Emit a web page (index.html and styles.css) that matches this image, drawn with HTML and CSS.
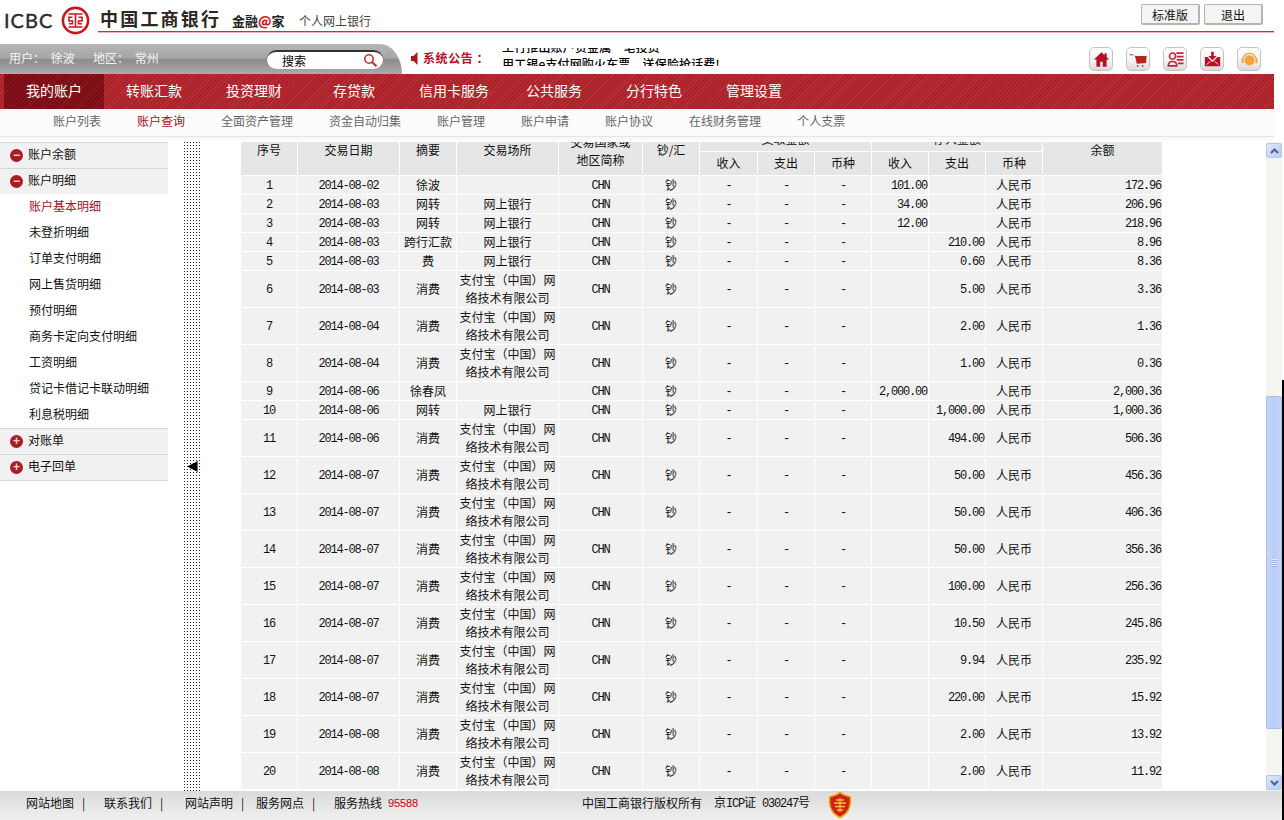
FILE: index.html
```html
<!DOCTYPE html>
<html lang="zh-CN">
<head>
<meta charset="utf-8">
<title>中国工商银行 个人网上银行</title>
<link rel="stylesheet" href="styles.css">
</head>
<body>
<header class="top">
  <div class="brand">
    <span class="icbc">ICBC</span>
    <svg class="logo" width="29" height="29" viewBox="0 0 29 29"><circle cx="14.5" cy="14.5" r="12.6" fill="none" stroke="#c8161d" stroke-width="2.6"/><path d="M7.500 8h14M7.500 21h14M14.500 8v13M11.500 11.300H8V15h3.500v2.800H8M17.500 11.300H21V15h-3.500v2.800H21" fill="none" stroke="#c8161d" stroke-width="1.600"/></svg>
    <span class="bankname">中国工商银行</span>
    <span class="slogan">金融<b>@</b>家</span>
    <span class="personal">个人网上银行</span>
  </div>
  <div class="top-btns">
    <span class="btn">标准版</span>
    <span class="btn">退出</span>
  </div>
</header>
<div class="rule"></div>

<div class="infobar">
  <div class="userbar">
    <span class="who">用户： 徐波</span>
    <span class="who region">地区： 常州</span>
    <div class="search">
      <span>搜索</span>
      <svg width="15" height="15" viewBox="0 0 15 15"><circle cx="6" cy="6" r="4.200" fill="none" stroke="#c9302c" stroke-width="1.600"/><path d="M9.200 9.200l4.300 4" stroke="#c9302c" stroke-width="2.200"/></svg>
    </div>
  </div>
  <svg class="speaker" width="7" height="13" viewBox="0 0 7 13"><path d="M0 4h2.500L6.500 0v13L2.500 9H0z" fill="#b5121b"/></svg>
  <span class="notice-label">系统公告<span class="colon">：</span></span>
  <div class="ticker">
    <div class="ticker-in">工行推出账户贵金属一笔投资<br>用工银e支付网购火车票，送保险抢话费!</div>
  </div>
  <div class="tiles">
    <span class="tile"><svg width="20" height="20" viewBox="0 0 20 20"><path d="M10 1.500L1 10h3v8.500h4.500v-6h3v6H16V10h3l-3-2.800V2.500h-2.500v2.400z" fill="#b5122a"/></svg></span>
    <span class="tile"><svg width="20" height="20" viewBox="0 0 20 20"><path d="M0 3.500l4 1 1 1.500h14.500l-.5 8-11 1-2-8.500-1-1.500L0 5z" fill="#b5251e"/><circle cx="9" cy="17.500" r="1" fill="#b5251e"/><circle cx="15" cy="17.500" r="1" fill="#b5251e"/></svg></span>
    <span class="tile"><svg width="20" height="20" viewBox="0 0 20 20"><circle cx="6.500" cy="6" r="3.600" fill="none" stroke="#c8213f" stroke-width="1.800"/><path d="M1.500 17.500c0-7 10-7 10 0z" fill="none" stroke="#c8213f" stroke-width="1.800"/><path d="M11 2.500h8.500M11.500 6.500h8M11.500 10.500h8M13 14.500h6.500" stroke="#c8213f" stroke-width="2"/></svg></span>
    <span class="tile"><svg width="20" height="20" viewBox="0 0 20 20"><path d="M8.500 1h3v5H15l-5 5-5-5h3.500z" fill="#b5122a"/><path d="M1 7h3l6 6 6-6h3v11H1z" fill="#b5122a"/><path d="M3 16l4.500-4M17 16l-4.500-4" stroke="#fff" stroke-width="1"/></svg></span>
    <span class="tile"><svg width="20" height="20" viewBox="0 0 20 20"><circle cx="10" cy="11" r="6" fill="#f7a23b"/><path d="M1.800 11a8.200 8.200 0 0 1 16.400 0" fill="none" stroke="#f7a23b" stroke-width="1.600"/><rect x=".5" y="8.500" width="2.500" height="6" rx="1" fill="#f7a23b"/><rect x="17" y="8.500" width="2.500" height="6" rx="1" fill="#f7a23b"/></svg></span>
  </div>
</div>

<nav class="mainnav">
  <a class="active">我的账户</a><a>转账汇款</a><a>投资理财</a><a>存贷款</a><a>信用卡服务</a><a>公共服务</a><a>分行特色</a><a>管理设置</a>
</nav>
<nav class="subnav">
  <a>账户列表</a><a class="on">账户查询</a><a>全面资产管理</a><a>资金自动归集</a><a>账户管理</a><a>账户申请</a><a>账户协议</a><a>在线财务管理</a><a>个人支票</a>
</nav>
<div class="fade"></div>

<main class="main">
  <aside class="side">
    <div class="group"><i class="dot">−</i>账户余额</div>
    <div class="group"><i class="dot">−</i>账户明细</div>
    <a class="item cur">账户基本明细</a>
    <a class="item">未登折明细</a>
    <a class="item">订单支付明细</a>
    <a class="item">网上售货明细</a>
    <a class="item">预付明细</a>
    <a class="item">商务卡定向支付明细</a>
    <a class="item">工资明细</a>
    <a class="item">贷记卡借记卡联动明细</a>
    <a class="item">利息税明细</a>
    <div class="group"><i class="dot">+</i>对账单</div>
    <div class="group last"><i class="dot">+</i>电子回单</div>
  </aside>
  <div class="strip"><span class="collapse"></span></div>
  <section class="content">
    <table class="ledger">
      <colgroup><col class="c57"><col class="c102"><col class="c57"><col class="c102"><col class="c84"><col class="c57"><col class="c58"><col class="c57"><col class="c57"><col class="c57"><col class="c57"><col class="c57"><col class="c120"></colgroup>
      <thead>
        <tr class="h1">
          <th rowspan="2">序号</th><th rowspan="2">交易日期</th><th rowspan="2">摘要</th><th rowspan="2">交易场所</th>
          <th rowspan="2" class="two">交易国家或<br>地区简称</th><th rowspan="2">钞/汇</th>
          <th colspan="3" class="grp">支取金额</th><th colspan="3" class="grp">存入金额</th><th rowspan="2">余额</th>
        </tr>
        <tr class="h2"><th>收入</th><th>支出</th><th>币种</th><th>收入</th><th>支出</th><th>币种</th></tr>
      </thead>
      <tbody>
        <tr><td class="m">1</td><td class="m">2014-08-02</td><td>徐波</td><td></td><td class="m">CHN</td><td>钞</td><td class="m">-</td><td class="m">-</td><td class="m">-</td><td class="m r">101.00</td><td class="m r"></td><td>人民币</td><td class="m r">172.96</td></tr>
        <tr><td class="m">2</td><td class="m">2014-08-03</td><td>网转</td><td>网上银行</td><td class="m">CHN</td><td>钞</td><td class="m">-</td><td class="m">-</td><td class="m">-</td><td class="m r">34.00</td><td class="m r"></td><td>人民币</td><td class="m r">206.96</td></tr>
        <tr><td class="m">3</td><td class="m">2014-08-03</td><td>网转</td><td>网上银行</td><td class="m">CHN</td><td>钞</td><td class="m">-</td><td class="m">-</td><td class="m">-</td><td class="m r">12.00</td><td class="m r"></td><td>人民币</td><td class="m r">218.96</td></tr>
        <tr><td class="m">4</td><td class="m">2014-08-03</td><td>跨行汇款</td><td>网上银行</td><td class="m">CHN</td><td>钞</td><td class="m">-</td><td class="m">-</td><td class="m">-</td><td class="m r"></td><td class="m r">210.00</td><td>人民币</td><td class="m r">8.96</td></tr>
        <tr><td class="m">5</td><td class="m">2014-08-03</td><td>费</td><td>网上银行</td><td class="m">CHN</td><td>钞</td><td class="m">-</td><td class="m">-</td><td class="m">-</td><td class="m r"></td><td class="m r">0.60</td><td>人民币</td><td class="m r">8.36</td></tr>
        <tr><td class="m">6</td><td class="m">2014-08-03</td><td>消费</td><td>支付宝（中国）网<br>络技术有限公司</td><td class="m">CHN</td><td>钞</td><td class="m">-</td><td class="m">-</td><td class="m">-</td><td class="m r"></td><td class="m r">5.00</td><td>人民币</td><td class="m r">3.36</td></tr>
        <tr><td class="m">7</td><td class="m">2014-08-04</td><td>消费</td><td>支付宝（中国）网<br>络技术有限公司</td><td class="m">CHN</td><td>钞</td><td class="m">-</td><td class="m">-</td><td class="m">-</td><td class="m r"></td><td class="m r">2.00</td><td>人民币</td><td class="m r">1.36</td></tr>
        <tr><td class="m">8</td><td class="m">2014-08-04</td><td>消费</td><td>支付宝（中国）网<br>络技术有限公司</td><td class="m">CHN</td><td>钞</td><td class="m">-</td><td class="m">-</td><td class="m">-</td><td class="m r"></td><td class="m r">1.00</td><td>人民币</td><td class="m r">0.36</td></tr>
        <tr><td class="m">9</td><td class="m">2014-08-06</td><td>徐春凤</td><td></td><td class="m">CHN</td><td>钞</td><td class="m">-</td><td class="m">-</td><td class="m">-</td><td class="m r">2,000.00</td><td class="m r"></td><td>人民币</td><td class="m r">2,000.36</td></tr>
        <tr><td class="m">10</td><td class="m">2014-08-06</td><td>网转</td><td>网上银行</td><td class="m">CHN</td><td>钞</td><td class="m">-</td><td class="m">-</td><td class="m">-</td><td class="m r"></td><td class="m r">1,000.00</td><td>人民币</td><td class="m r">1,000.36</td></tr>
        <tr><td class="m">11</td><td class="m">2014-08-06</td><td>消费</td><td>支付宝（中国）网<br>络技术有限公司</td><td class="m">CHN</td><td>钞</td><td class="m">-</td><td class="m">-</td><td class="m">-</td><td class="m r"></td><td class="m r">494.00</td><td>人民币</td><td class="m r">506.36</td></tr>
        <tr><td class="m">12</td><td class="m">2014-08-07</td><td>消费</td><td>支付宝（中国）网<br>络技术有限公司</td><td class="m">CHN</td><td>钞</td><td class="m">-</td><td class="m">-</td><td class="m">-</td><td class="m r"></td><td class="m r">50.00</td><td>人民币</td><td class="m r">456.36</td></tr>
        <tr><td class="m">13</td><td class="m">2014-08-07</td><td>消费</td><td>支付宝（中国）网<br>络技术有限公司</td><td class="m">CHN</td><td>钞</td><td class="m">-</td><td class="m">-</td><td class="m">-</td><td class="m r"></td><td class="m r">50.00</td><td>人民币</td><td class="m r">406.36</td></tr>
        <tr><td class="m">14</td><td class="m">2014-08-07</td><td>消费</td><td>支付宝（中国）网<br>络技术有限公司</td><td class="m">CHN</td><td>钞</td><td class="m">-</td><td class="m">-</td><td class="m">-</td><td class="m r"></td><td class="m r">50.00</td><td>人民币</td><td class="m r">356.36</td></tr>
        <tr><td class="m">15</td><td class="m">2014-08-07</td><td>消费</td><td>支付宝（中国）网<br>络技术有限公司</td><td class="m">CHN</td><td>钞</td><td class="m">-</td><td class="m">-</td><td class="m">-</td><td class="m r"></td><td class="m r">100.00</td><td>人民币</td><td class="m r">256.36</td></tr>
        <tr><td class="m">16</td><td class="m">2014-08-07</td><td>消费</td><td>支付宝（中国）网<br>络技术有限公司</td><td class="m">CHN</td><td>钞</td><td class="m">-</td><td class="m">-</td><td class="m">-</td><td class="m r"></td><td class="m r">10.50</td><td>人民币</td><td class="m r">245.86</td></tr>
        <tr><td class="m">17</td><td class="m">2014-08-07</td><td>消费</td><td>支付宝（中国）网<br>络技术有限公司</td><td class="m">CHN</td><td>钞</td><td class="m">-</td><td class="m">-</td><td class="m">-</td><td class="m r"></td><td class="m r">9.94</td><td>人民币</td><td class="m r">235.92</td></tr>
        <tr><td class="m">18</td><td class="m">2014-08-07</td><td>消费</td><td>支付宝（中国）网<br>络技术有限公司</td><td class="m">CHN</td><td>钞</td><td class="m">-</td><td class="m">-</td><td class="m">-</td><td class="m r"></td><td class="m r">220.00</td><td>人民币</td><td class="m r">15.92</td></tr>
        <tr><td class="m">19</td><td class="m">2014-08-08</td><td>消费</td><td>支付宝（中国）网<br>络技术有限公司</td><td class="m">CHN</td><td>钞</td><td class="m">-</td><td class="m">-</td><td class="m">-</td><td class="m r"></td><td class="m r">2.00</td><td>人民币</td><td class="m r">13.92</td></tr>
        <tr><td class="m">20</td><td class="m">2014-08-08</td><td>消费</td><td>支付宝（中国）网<br>络技术有限公司</td><td class="m">CHN</td><td>钞</td><td class="m">-</td><td class="m">-</td><td class="m">-</td><td class="m r"></td><td class="m r">2.00</td><td>人民币</td><td class="m r">11.92</td></tr>
      </tbody>
    </table>
  </section>
  <div class="scroll">
    <span class="sbtn"><svg width="9" height="6" viewBox="0 0 9 6"><path d="M1 5l3.500-3.500L8 5" fill="none" stroke="#4d6185" stroke-width="2"/></svg></span>
    <span class="thumb"><span class="grip"></span></span>
    <span class="sbtn down"><svg width="9" height="6" viewBox="0 0 9 6"><path d="M1 1l3.500 3.500L8 1" fill="none" stroke="#4d6185" stroke-width="2"/></svg></span>
  </div>
</main>

<footer class="foot">
  <span class="f26">网站地图</span><span class="fs8">|</span>
  <span class="f22">联系我们</span><span class="fs8">|</span>
  <span class="f23">网站声明</span><span class="fs8">|</span>
  <span class="f14">服务网点</span><span class="fs8">|</span>
  <span class="f20">服务热线</span><span class="hot">95588</span>
  <span class="fcopy">中国工商银行版权所有</span>
  <span class="ficp">京<span class="mono">ICP</span>证</span><span class="fno"><span class="mono">030247</span>号</span>
  <svg class="badge" width="24" height="28" viewBox="0 0 24 28"><path d="M12 .5l4 2.500 7 2.500c1 9-1 17-11 22C2 22.500 0 14.500 1 5.500L8 3z" fill="#e8a80c"/><path d="M12 2.500l3.500 2 6 2c.8 8-1 15-9.500 19C3.500 21.500 1.700 14.500 2.500 6.500l6-2z" fill="#d0201c"/><path d="M6 12h12M8 9h8M7 15.500h10M9 19h6M12 7v14" stroke="#f3c33a" stroke-width="1.300"/></svg>
</footer>
<div class="edge"></div>
</body>
</html>
```
FILE: styles.css
```css
* { box-sizing: border-box; }
html, body { margin: 0; height: 820px; overflow: hidden; background: #fff; }
body { font: 12px/18px "Noto Sans CJK SC", "Noto Sans", sans-serif; color: #111; position: relative; }
a { color: inherit; text-decoration: none; }

.top { height: 31px; display: flex; justify-content: space-between; }
.brand { display: flex; align-items: center; height: 31px; padding-left: 4px; position: relative; }
.icbc { font: 400 20px/20px Lato, "Liberation Sans", sans-serif; width: 57px; margin-top: 9px; color: #2b2b2b; letter-spacing: 1px; -webkit-text-stroke: .4px #2b2b2b; }
.logo { width: 29px; height: 29px; margin-top: 10px; }
.bankname { margin-left: 10px; width: 132px; font-size: 18px; font-weight: 700; color: #2e2523; letter-spacing: 2.2px; line-height: 20px; margin-top: 5px; white-space: nowrap; }
.slogan { font-size: 13px; font-weight: 700; color: #222; width: 67px; margin-top: 10px; white-space: nowrap; }
.slogan b { color: #d3151c; }
.personal { color: #444; margin-top: 10px; white-space: nowrap; }
.top-btns { display: flex; gap: 4px; padding: 4px 21px 0 0; align-items: flex-start; }
.btn { width: 59px; height: 21px; line-height: 19px; text-align: center; border: 1px solid #b4b4b4; border-bottom-width: 2px; border-right-width: 2px; border-radius: 2px; background: #f4f4f4; color: #111; }
.rule { width: 1176px; height: 2px; margin-left: 98px; background: linear-gradient(#cf2f38 50%, #eeb6ba 50%); }

.infobar { height: 41px; width: 1274px; display: flex; align-items: flex-start; padding-top: 11px; }
.userbar { width: 402px; height: 30px; display: flex; align-items: flex-start; flex: none; padding: 5px 0 0 9px; color: #fff; border-top-right-radius: 22px 30px; background: linear-gradient(#b6b6b6, #a6a6a6 46%, #8d8d8d 52%, #949494 66%, #acacac); }
.who { width: 84px; white-space: pre; word-spacing: 3px; color: #f3f3f3; }
.region { width: 174px; }
.search { width: 116px; height: 19px; margin-top: 1px; border-radius: 10px; border-top: 2px solid #333; background: #fff; display: flex; align-items: center; justify-content: space-between; padding: 0 5px 0 15px; color: #000; }
.speaker { margin: 8px 0 0 9px; flex: none; }
.notice-label { margin: 5px 0 0 5px; width: 79px; font-weight: 700; color: #b5122a; letter-spacing: .6px; flex: none; white-space: nowrap; }
.colon { margin-left: 3px; }
.ticker { width: 220px; height: 18px; margin-top: 4px; overflow: hidden; flex: none; }
.ticker-in { margin-top: -10px; line-height: 17px; font-weight: 500; color: #000; white-space: nowrap; letter-spacing: .15px; }
.tiles { display: flex; gap: 13px; margin-left: auto; padding-right: 13px; margin-top: 3px; }
.tile { width: 24px; height: 24px; display: flex; align-items: center; justify-content: center; border: 1px solid #c4c4c4; border-radius: 5px; background: linear-gradient(#fff, #f2f2f2 60%, #d9d9d9); }
.tile svg { width: 17px; height: 17px; }

.mainnav { width: 1274px; height: 35px; padding-left: 4px; display: flex; background: repeating-linear-gradient(135deg, #ad2229 0 2px, #b6323a 2px 3px); }
.mainnav a { width: 100px; text-align: center; font-size: 14px; line-height: 33px; color: #fff; }
.mainnav a.active { background: repeating-linear-gradient(135deg, #7a0d13 0 2px, #861a20 2px 3px); }
.subnav { width: 1274px; height: 28px; padding-left: 53px; display: flex; gap: 36px; background: #fcfcfc; border-bottom: 1px solid #e6e6e6; color: #666; line-height: 23px; }
.subnav .on { color: #a5121b; }
.fade { width: 1274px; height: 5px; background: linear-gradient(#f6f6f6, #fff); }

.main { height: 649px; display: flex; overflow: hidden; }
.side { width: 168px; flex: none; }
.group { height: 26px; background: #f1f1f1; border-top: 1px solid #d6d6d6; display: flex; align-items: flex-start; line-height: 22px; }
.group.last { border-bottom: 1px solid #d6d6d6; height: 27px; }
.dot { width: 13px; height: 13px; margin: 6px 5px 0 10px; border-radius: 50%; background: #aa1c24; color: #f3d4d6; font: 700 12px/13px "Liberation Sans", sans-serif; text-align: center; flex: none; }
.item { display: block; height: 26px; line-height: 23px; padding-left: 29px; color: #111; }
.item.cur { color: #a5121b; }

.strip { position: relative; width: 17px; margin-left: 16px; flex: none; background: repeating-linear-gradient(0deg, transparent 0 1px, #fff 1px 3px), repeating-linear-gradient(90deg, #222 0 1px, #fff 1px 3px); }
.collapse { position: absolute; left: 3px; top: 319px; width: 11px; height: 11px; background: #000; border-right: 1px solid #1f8fc4; clip-path: polygon(0 50%, 100% 0, 100% 100%); }

.content { width: 922px; margin-left: 40px; flex: none; overflow: hidden; }
.ledger { width: 922px; margin-top: -22px; table-layout: fixed; border-collapse: separate; border-spacing: 0; text-align: center; }
.c57 { width: 57px; } .c58 { width: 58px; } .c84 { width: 84px; } .c102 { width: 102px; } .c120 { width: 120px; }
.ledger th, .ledger td { padding: 0; font-weight: 400; line-height: 18px; border-right: 1px solid #fff; border-bottom: 1px solid #fff; vertical-align: middle; }
.ledger th { background: #e6e6e6; vertical-align: top; padding-top: 21px; }
.ledger th.two { padding-top: 13px; }
.ledger th.grp { padding-top: 10px; }
.ledger .h1 { height: 32px; }
.ledger .h2 { height: 24px; }
.ledger .h2 th { padding-top: 2px; }
.ledger td { background: #f1f1f1; }
.ledger .m, .mono { font-family: "Liberation Mono", monospace; letter-spacing: -1.2px; }
.ledger td.m { line-height: 16px; padding-top: 2px; }
.ledger .r { text-align: right; padding-right: 1px; }

.scroll { width: 16px; margin-left: 103px; flex: none; background: #f5f4ee; display: flex; flex-direction: column; padding-top: 1px; }
.sbtn { height: 15px; display: flex; align-items: center; justify-content: center; border: 1px solid #b4c8f2; border-radius: 2px; background: linear-gradient(135deg, #dce6fc, #b8ccf6); flex: none; }
.sbtn.down { margin-top: auto; margin-bottom: 1px; }
.thumb { height: 333px; margin-top: 238px; display: flex; align-items: center; justify-content: center; border: 1px solid #a6bcec; border-radius: 2px; background: linear-gradient(90deg, #c6d6f9, #b8cdf8 50%, #c4d5f9); flex: none; }
.grip { width: 7px; height: 8px; background: repeating-linear-gradient(#e6edfd 0 1px, #9db5e6 1px 2px); }

.foot { width: 1282px; height: 29px; display: flex; align-items: center; padding-bottom: 5px; background: linear-gradient(#dadada, #f0f0f0); color: #111; line-height: 24px; white-space: nowrap; }
.f26 { margin-left: 26px; } .f22 { margin-left: 18px; } .f23 { margin-left: 21px; } .f14 { margin-left: 11px; } .f20 { margin-left: 18px; }
.fs8 { margin-left: 8px; width: 4px; }
.hot { margin-left: 6px; font: 11px/24px "Liberation Sans", sans-serif; letter-spacing: -.15px; color: #c00; }
.fcopy { margin-left: 164px; }
.ficp { margin-left: 12px; }
.fno { margin-left: 6px; }
.foot .mono { font-size: 12px; }
.badge { margin-left: 18px; flex: none; align-self: flex-start; }
.edge { position: absolute; right: 0; top: 380px; bottom: 0; width: 2px; background: #000; }
```
